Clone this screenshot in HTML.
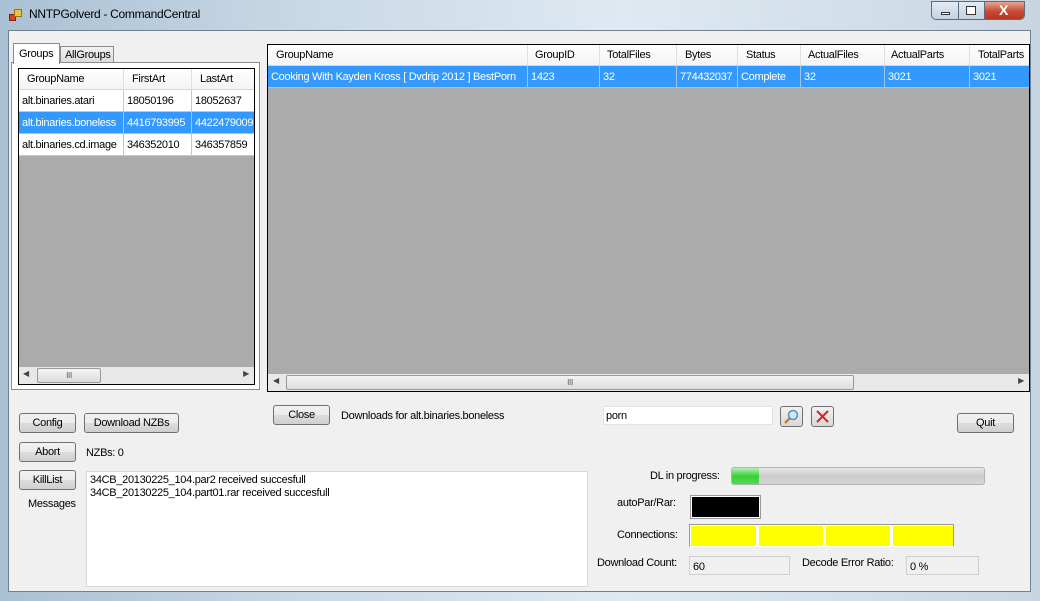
<!DOCTYPE html>
<html><head><meta charset="utf-8"><style>
*{box-sizing:border-box;margin:0;padding:0}
body{width:1040px;height:601px;overflow:hidden;position:relative;background:linear-gradient(90deg,#aac0d4,#c9d9e6 30%,#dfe9f1 60%,#c8d6e2);font-family:"Liberation Sans",sans-serif;font-size:11px;letter-spacing:-0.3px;color:#000}
.a{position:absolute}
.client{left:8px;top:30px;width:1023px;height:562px;background:#f0f0f0;border:1px solid #6f8090}
.btn{position:absolute;border:1px solid #707070;border-radius:3px;background:linear-gradient(#f2f2f2,#ebebeb 50%,#dddddd 51%,#cfcfcf);text-align:center;line-height:18px;font-size:11px}
.grid{position:absolute;background:#ababab;border:1px solid #000;overflow:hidden}
.hdr{position:absolute;left:0;top:0;height:21px;background:linear-gradient(#fff,#f4f4f4);border-bottom:1px solid #d5d5d5}
.c{position:absolute;top:0;height:100%;padding-left:4px;line-height:21px;border-right:1px solid #e0e0e0;white-space:nowrap;overflow:hidden}
.row{position:absolute;left:0;height:22px;background:#fff}
.row .c{line-height:22px;border-right:1px solid #c8c8c8;border-bottom:1px solid #c8c8c8;padding-left:3px}
.sel{background:#3399ff;color:#fff}
.sel .c{border-color:#9cc6f5}
.sb{position:absolute;background:#e8e8e8;height:17px}
.thumb{position:absolute;top:1px;height:15px;border:1px solid #999;border-radius:2px;background:linear-gradient(#f4f4f4,#dcdcdc);text-align:center;font-size:8px;line-height:13px;color:#555}
.lbl{position:absolute;white-space:nowrap}
.box{position:absolute;border:1px solid #cfcfcf;background:#f0f0f0}
</style></head><body>
<div class="a" style="left:9px;top:8px;width:14px;height:14px">
<div class="a" style="left:0;top:6px;width:7px;height:7px;background:#e04020;border:1px solid #802010"></div>
<div class="a" style="left:5px;top:1px;width:8px;height:8px;background:#f0c040;border:1px solid #a07010"></div></div>
<div class="lbl" style="left:29px;top:7px;font-size:12px;color:#000">NNTPGolverd - CommandCentral</div>
<div class="a" style="left:931px;top:1px;width:94px;height:19px;border:1px solid #5a6b7c;border-radius:0 0 5px 5px;background:linear-gradient(#e3ebf3,#c2d2e1);overflow:hidden">
<div class="a" style="left:26px;top:0;width:1px;height:19px;background:#5a6b7c"></div>
<div class="a" style="left:52px;top:0;width:42px;height:19px;background:linear-gradient(#e9a594,#c64a33 50%,#b8301c);border-left:1px solid #5a6b7c"></div>
<div class="a" style="left:9px;top:10px;width:9px;height:3px;border:1px solid #333;background:#fff"></div>
<div class="a" style="left:34px;top:4px;width:10px;height:9px;border:1px solid #333;background:#fff"></div>
<div class="a" style="left:67px;top:0;color:#fff;font-weight:bold;font-size:14px">X</div>
</div>
<div class="a client"></div>

<div class="a" style="left:11px;top:62px;width:249px;height:328px;border:1px solid #898c95;background:#fff"></div>
<div class="a" style="left:13px;top:43px;width:47px;height:21px;border:1px solid #898c95;border-bottom:none;background:#fff;padding:4px 0 0 5px">Groups</div>
<div class="a" style="left:60px;top:46px;width:54px;height:17px;border:1px solid #898c95;background:linear-gradient(#f2f2f2,#dcdcdc);padding:2px 0 0 4px">AllGroups</div>

<div class="grid" style="left:18px;top:68px;width:237px;height:317px">
<div class="hdr" style="width:235px"><div class="c" style="left:0;width:105px;padding-left:8px">GroupName</div><div class="c" style="left:105px;width:68px;padding-left:8px">FirstArt</div><div class="c" style="left:173px;width:70px;padding-left:8px">LastArt</div></div>
<div class="row" style="top:21px;width:235px"><div class="c" style="left:0;width:105px">alt.binaries.atari</div><div class="c" style="left:105px;width:68px">18050196</div><div class="c" style="left:173px;width:70px">18052637</div></div>
<div class="row sel" style="top:43px;width:235px"><div class="c" style="left:0;width:105px">alt.binaries.boneless</div><div class="c" style="left:105px;width:68px">4416793995</div><div class="c" style="left:173px;width:70px">4422479009</div></div>
<div class="row" style="top:65px;width:235px"><div class="c" style="left:0;width:105px">alt.binaries.cd.image</div><div class="c" style="left:105px;width:68px">346352010</div><div class="c" style="left:173px;width:70px">346357859</div></div>
<div class="sb" style="left:0;top:298px;width:235px"><span class="a" style="left:4px;top:2px;font-size:8px;color:#444">◀</span><div class="thumb" style="left:18px;width:64px">III</div><span class="a" style="right:5px;top:2px;font-size:8px;color:#444">▶</span></div>
</div>

<div class="grid" style="left:267px;top:44px;width:763px;height:348px">
<div class="hdr" style="width:761px">
<div class="c" style="left:0;width:260px;padding-left:8px">GroupName</div>
<div class="c" style="left:260px;width:72px;padding-left:7px">GroupID</div>
<div class="c" style="left:332px;width:77px;padding-left:7px">TotalFiles</div>
<div class="c" style="left:409px;width:61px;padding-left:8px">Bytes</div>
<div class="c" style="left:470px;width:63px;padding-left:8px">Status</div>
<div class="c" style="left:533px;width:84px;padding-left:7px">ActualFiles</div>
<div class="c" style="left:617px;width:85px;padding-left:6px">ActualParts</div>
<div class="c" style="left:702px;width:70px;padding-left:8px">TotalParts</div></div>
<div class="row sel" style="top:21px;width:761px">
<div class="c" style="left:0;width:260px">Cooking With Kayden Kross [ Dvdrip 2012 ] BestPorn</div>
<div class="c" style="left:260px;width:72px">1423</div>
<div class="c" style="left:332px;width:77px">32</div>
<div class="c" style="left:409px;width:61px">774432037</div>
<div class="c" style="left:470px;width:63px">Complete</div>
<div class="c" style="left:533px;width:84px">32</div>
<div class="c" style="left:617px;width:85px">3021</div>
<div class="c" style="left:702px;width:70px">3021</div></div>
<div class="sb" style="left:0;top:329px;width:761px"><span class="a" style="left:5px;top:2px;font-size:8px;color:#444">◀</span><div class="thumb" style="left:18px;width:568px">III</div><span class="a" style="right:5px;top:2px;font-size:8px;color:#444">▶</span></div>
</div>

<div class="btn" style="left:19px;top:413px;width:57px;height:20px">Config</div>
<div class="btn" style="left:84px;top:413px;width:95px;height:20px">Download NZBs</div>
<div class="btn" style="left:19px;top:442px;width:57px;height:20px">Abort</div>
<div class="btn" style="left:19px;top:470px;width:57px;height:20px">KillList</div>
<div class="btn" style="left:273px;top:405px;width:57px;height:20px">Close</div>
<div class="btn" style="left:957px;top:413px;width:57px;height:20px">Quit</div>
<div class="lbl" style="left:86px;top:447px">NZBs: 0</div>
<div class="lbl" style="left:28px;top:498px">Messages</div>
<div class="lbl" style="left:341px;top:410px">Downloads for alt.binaries.boneless</div>

<div class="a" style="left:603px;top:406px;width:170px;height:19px;background:#fff;border:1px solid #e3e3e3;padding:3px 0 0 2px">porn</div>
<div class="btn" style="left:780px;top:406px;width:23px;height:21px;background:linear-gradient(#f2f2f2,#d8d8d8)">
<svg width="21" height="19" viewBox="0 0 21 19"><circle cx="12" cy="8" r="4.5" fill="#cfe8f8" stroke="#5a8fb8" stroke-width="1.5"/><line x1="8.5" y1="11.5" x2="4" y2="16" stroke="#c08030" stroke-width="2.5"/></svg></div>
<div class="btn" style="left:811px;top:406px;width:23px;height:21px;background:linear-gradient(#f2f2f2,#d8d8d8)">
<svg width="21" height="19" viewBox="0 0 21 19"><path d="M5 4L16 15M16 4L5 15" stroke="#e02020" stroke-width="2"/></svg></div>

<div class="a" style="left:86px;top:471px;width:502px;height:116px;background:#fff;border:1px solid #d8d8d8;padding:2px 0 0 3px;line-height:13px">34CB_20130225_104.par2 received succesfull<br>34CB_20130225_104.part01.rar received succesfull</div>

<div class="lbl" style="left:650px;top:470px">DL in progress:</div>
<div class="a" style="left:731px;top:467px;width:254px;height:18px;border:1px solid #b2b2b2;border-radius:3px;background:linear-gradient(#e8e8e8,#cbcbcb 50%,#d6d6d6);overflow:hidden"><div style="width:27px;height:100%;background:linear-gradient(#b6f0b6,#38d038 50%,#50dc50)"></div></div>
<div class="lbl" style="left:617px;top:497px">autoPar/Rar:</div>
<div class="a" style="left:690px;top:495px;width:71px;height:24px;border:1px solid #999;background:#000;box-shadow:inset 0 0 0 1px #fff"></div>
<div class="lbl" style="left:617px;top:529px">Connections:</div>
<div class="a" style="left:689px;top:524px;width:265px;height:23px;border:1px solid #999;border-bottom-color:#fff;background:#fff">
<div class="a" style="left:1px;top:1px;width:65px;height:20px;background:#ff0"></div>
<div class="a" style="left:69px;top:1px;width:64px;height:20px;background:#ff0"></div>
<div class="a" style="left:136px;top:1px;width:64px;height:20px;background:#ff0"></div>
<div class="a" style="left:203px;top:1px;width:60px;height:20px;background:#ff0"></div></div>
<div class="lbl" style="left:597px;top:557px">Download Count:</div>
<div class="box" style="left:689px;top:556px;width:101px;height:19px;padding:4px 0 0 3px">60</div>
<div class="lbl" style="left:802px;top:557px">Decode Error Ratio:</div>
<div class="box" style="left:906px;top:556px;width:73px;height:19px;padding:4px 0 0 3px">0 %</div>
</body></html>
